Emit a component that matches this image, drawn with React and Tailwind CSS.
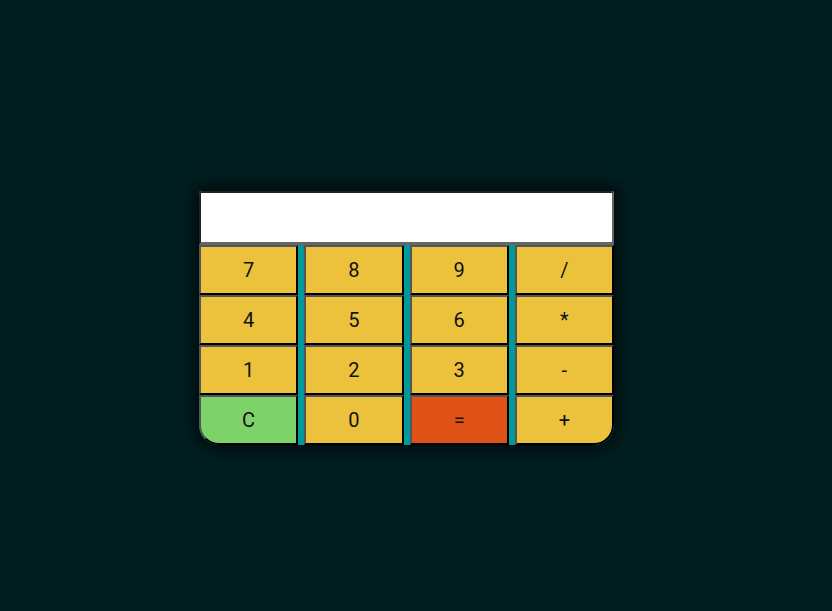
export default function App() {
  const keys = [
    ["7", ""], ["8", ""], ["9", ""], ["/", ""],
    ["4", ""], ["5", ""], ["6", ""], ["*", ""],
    ["1", ""], ["2", ""], ["3", ""], ["-", ""],
    ["C", "green"], ["0", ""], ["=", "orange"], ["+", ""],
  ];
  return (
    <div className="w-[832px] h-[611px] bg-[#011e20] flex items-center justify-center pr-[19px] pt-[25px]" style={{ fontFamily: "Roboto, 'Liberation Sans', sans-serif" }}>
      <div className="w-[415px] h-[254px] bg-[#00999a] rounded-b-[20px] rounded-t-[3px] overflow-hidden flex flex-col shadow-[0_0_14px_6px_rgba(0,0,0,0.55)]">
        <div className="h-[54px] bg-white border-2 border-t-[#222] border-l-[#222] border-b-[#666] border-r-[#666] border-b-[3px]"></div>
        <div className="grid grid-cols-4 grid-rows-4 gap-x-[6px] flex-1">
          {keys.map(([k, c], i) => {
            const bg = c === "green" ? "bg-[#7dd36a]" : c === "orange" ? "bg-[#e05118]" : "bg-[#ecc13c]";
            const round = i === 12 ? "rounded-bl-[20px]" : i === 15 ? "rounded-br-[20px]" : "";
            return (
              <div
                key={i}
                className={`${bg} ${round} flex items-center justify-center text-[20px] text-[#111] border-2 border-t-[#555] border-l-[#555] border-b-[#000] border-r-[#000]`}
              >
                {k}
              </div>
            );
          })}
        </div>
      </div>
    </div>
  );
}
